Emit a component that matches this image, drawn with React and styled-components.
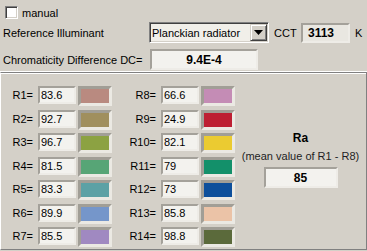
import React from "react";
import styled, { createGlobalStyle } from "styled-components";

const Global = createGlobalStyle`
  html, body { margin: 0; padding: 0; background: #d4d0c8; }
  #root { width: 367px; height: 251px; }
`;

const Root = styled.div`
  width: 367px;
  height: 251px;
  background: #d4d0c8;
  font-family: "Liberation Sans", Arial, sans-serif;
  font-size: 11px;
  color: #000;
  display: flex;
  flex-direction: column;
  overflow: hidden;
`;

const Top = styled.div`
  box-sizing: border-box;
  height: 72px;
  flex: none;
  display: flex;
  flex-direction: column;
  padding: 5px 0 0 3px;
  border-bottom: 1px solid #ffffff;
`;

const Row = styled.div`
  display: flex;
  align-items: center;
  height: ${(p) => p.$h}px;
  margin-top: ${(p) => p.$mt || 0}px;
`;

const Check = styled.span`
  box-sizing: border-box;
  width: 13px;
  height: 13px;
  margin-left: 2px;
  margin-right: 4px;
  background: #fff;
  border: 1px solid;
  border-color: #808080 #ffffff #ffffff #808080;
  box-shadow: inset 1px 1px 0 #404040, inset -1px -1px 0 #d4d0c8;
`;

const Label = styled.span`
  flex: none;
  width: ${(p) => (p.$w ? `${p.$w}px` : "auto")};
  margin-left: ${(p) => p.$ml || 0}px;
  white-space: nowrap;
`;

const Select = styled.div`
  box-sizing: border-box;
  width: 120px;
  height: 21px;
  display: flex;
  align-items: stretch;
  border: 1px solid;
  border-color: #808080 #ffffff #ffffff #808080;
  box-shadow: inset 1px 1px 0 #404040, inset -1px -1px 0 #d4d0c8;
  background: #f1efe9;
  padding: 1px;
`;

const SelectText = styled.span`
  flex: 1;
  display: flex;
  align-items: center;
  padding-left: 1px;
  white-space: nowrap;
  overflow: hidden;
`;

const ArrowButton = styled.span`
  box-sizing: border-box;
  width: 17px;
  flex: none;
  display: flex;
  align-items: center;
  justify-content: center;
  background: #d4d0c8;
  border: 1px solid;
  border-color: #d4d0c8 #404040 #404040 #d4d0c8;
  box-shadow: inset 1px 1px 0 #ffffff, inset -1px -1px 0 #808080;
`;

const Field = styled.div`
  box-sizing: border-box;
  flex: none;
  width: ${(p) => p.$w}px;
  height: ${(p) => p.$h}px;
  margin-left: ${(p) => p.$ml || 0}px;
  border: 2px solid;
  border-color: #a4a19a #eeece7 #eeece7 #a4a19a;
  background: ${(p) => p.$bg || "#f3f2ee"};
  display: flex;
  align-items: center;
  justify-content: ${(p) => (p.$center ? "center" : "flex-start")};
  padding-left: ${(p) => p.$pl || 0}px;
  font-weight: ${(p) => (p.$bold ? "bold" : "normal")};
  font-size: ${(p) => (p.$bold ? "12px" : "11px")};
  white-space: nowrap;
`;

const Panel = styled.div`
  box-sizing: border-box;
  flex: none;
  height: 178px;
  display: flex;
  align-items: flex-start;
  border-top: 1px solid #808080;
  border-right: 1px solid #808080;
  border-bottom: 1px solid #808080;
  border-left: 1px solid #ffffff;
  box-shadow: inset 0 1px 0 #ffffff;
  padding-top: 13px;
`;

const RCol = styled.div`
  display: grid;
  grid-template-columns: ${(p) => p.$lw}px 38px 34px;
  column-gap: 2px;
  grid-auto-rows: 20px;
  row-gap: 3.5px;
  align-items: start;
  margin-left: ${(p) => p.$ml || 0}px;
`;

const RLabel = styled.span`
  text-align: right;
  padding-right: 3px;
  line-height: 18px;
  white-space: nowrap;
`;

const Swatch = styled.span`
  box-sizing: border-box;
  width: 34px;
  height: 20px;
  border: 3px solid;
  border-color: #a19e96 #ebe9e3 #ebe9e3 #a19e96;
  background: ${(p) => p.$c};
`;

const RaSection = styled.div`
  flex: 1;
  align-self: stretch;
  display: flex;
  flex-direction: column;
  align-items: center;
  justify-content: center;
  padding-bottom: 16px;
`;

const RaTitle = styled.div`
  font-weight: bold;
  font-size: 12px;
  line-height: 14px;
`;

const RaSub = styled.div`
  margin-top: 4px;
  line-height: 14px;
  color: #1e1e24;
  white-space: nowrap;
`;

const RaBox = styled(Field)`
  margin-top: 4px;
`;

const left = [
  ["R1=", "83.6", "#b98a80"],
  ["R2=", "92.7", "#a08f5e"],
  ["R3=", "96.7", "#8ca242"],
  ["R4=", "81.5", "#57a576"],
  ["R5=", "83.3", "#5ca1a5"],
  ["R6=", "89.9", "#7596ca"],
  ["R7=", "85.5", "#a089c1"],
];

const right = [
  ["R8=", "66.6", "#c48cb5"],
  ["R9=", "24.9", "#bd1f33"],
  ["R10=", "82.1", "#ebcb31"],
  ["R11=", "79", "#13906a"],
  ["R12=", "73", "#0d4f9b"],
  ["R13=", "85.8", "#ebc3a7"],
  ["R14=", "98.8", "#5b6a3b"],
];

function RColumn({ items, lw, ml }) {
  return (
    <RCol $lw={lw} $ml={ml}>
      {items.map(([l, v, c]) => (
        <React.Fragment key={l}>
          <RLabel>{l}</RLabel>
          <Field $w={38} $h={18} $pl={1}>{v}</Field>
          <Swatch $c={c} />
        </React.Fragment>
      ))}
    </RCol>
  );
}

export default function App() {
  return (
    <Root>
      <Global />
      <Top>
        <Row $h={15}>
          <Check />
          <Label>manual</Label>
        </Row>
        <Row $h={21} $mt={2}>
          <Label $w={146}>Reference Illuminant</Label>
          <Select>
            <SelectText>Planckian radiator</SelectText>
            <ArrowButton>
              <svg width="9" height="5" viewBox="0 0 9 5">
                <polygon points="0,0 9,0 4.5,5" fill="#000" />
              </svg>
            </ArrowButton>
          </Select>
          <Label $ml={5} $w={27}>CCT</Label>
          <Field $w={49} $h={20} $bold $pl={5} $bg="#e9e7e1">3113</Field>
          <Label $ml={5}>K</Label>
        </Row>
        <Row $h={21} $mt={6}>
          <Label $w={147}>Chromaticity Difference DC=</Label>
          <Field $w={108} $h={21} $bold $center>9.4E-4</Field>
        </Row>
      </Top>
      <Panel>
        <RColumn items={left} lw={35} />
        <RColumn items={right} lw={36} ml={11} />
        <RaSection>
          <RaTitle>Ra</RaTitle>
          <RaSub>(mean value of R1 - R8)</RaSub>
          <RaBox $w={74} $h={21} $bold $center>85</RaBox>
        </RaSection>
      </Panel>
    </Root>
  );
}
